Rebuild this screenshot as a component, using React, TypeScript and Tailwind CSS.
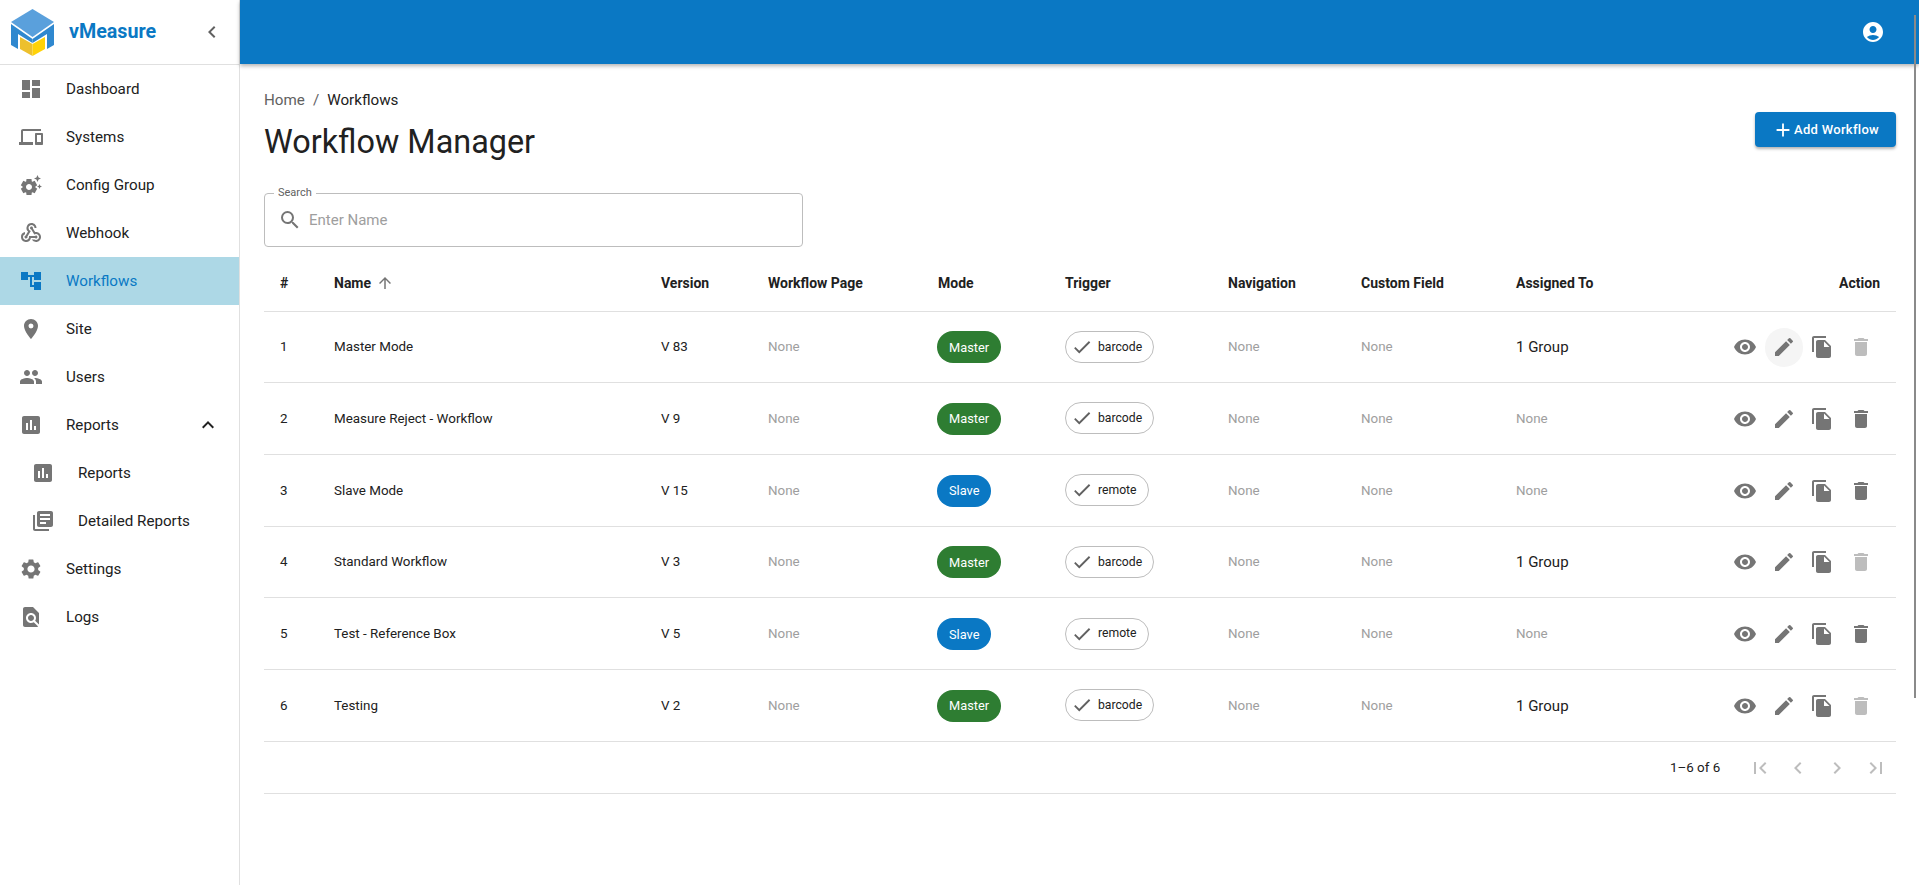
import {
  MdDashboard,
  MdOutlineDevices,
  MdSettingsSuggest,
  MdWebhook,
  MdAccountTree,
  MdPlace,
  MdPeople,
  MdAssessment,
  MdLibraryBooks,
  MdSettings,
  MdFindInPage,
  MdChevronLeft,
  MdExpandLess,
  MdAccountCircle,
  MdAdd,
  MdSearch,
  MdArrowUpward,
  MdVisibility,
  MdEdit,
  MdFileCopy,
  MdDelete,
  MdCheck,
  MdFirstPage,
  MdLastPage,
  MdKeyboardArrowLeft,
  MdKeyboardArrowRight,
} from 'react-icons/md';

const navItems = [
  { label: 'Dashboard', icon: MdDashboard },
  { label: 'Systems', icon: MdOutlineDevices },
  { label: 'Config Group', icon: MdSettingsSuggest },
  { label: 'Webhook', icon: MdWebhook },
  { label: 'Workflows', icon: MdAccountTree, active: true },
  { label: 'Site', icon: MdPlace },
  { label: 'Users', icon: MdPeople },
  { label: 'Reports', icon: MdAssessment, open: true },
  { label: 'Reports', icon: MdAssessment, sub: true },
  { label: 'Detailed Reports', icon: MdLibraryBooks, sub: true },
  { label: 'Settings', icon: MdSettings },
  { label: 'Logs', icon: MdFindInPage },
];

const columns = ['#', 'Name', 'Version', 'Workflow Page', 'Mode', 'Trigger', 'Navigation', 'Custom Field', 'Assigned To'];

const rows = [
  { name: 'Master Mode', version: 'V 83', mode: 'Master', trigger: 'barcode', assigned: '1 Group' },
  { name: 'Measure Reject - Workflow', version: 'V 9', mode: 'Master', trigger: 'barcode', assigned: 'None' },
  { name: 'Slave Mode', version: 'V 15', mode: 'Slave', trigger: 'remote', assigned: 'None' },
  { name: 'Standard Workflow', version: 'V 3', mode: 'Master', trigger: 'barcode', assigned: '1 Group' },
  { name: 'Test - Reference Box', version: 'V 5', mode: 'Slave', trigger: 'remote', assigned: 'None' },
  { name: 'Testing', version: 'V 2', mode: 'Master', trigger: 'barcode', assigned: '1 Group' },
];

function Logo() {
  return (
    <svg width="43" height="47" viewBox="0 0 43 47" className="shrink-0">
      <path d="M21.5 0 43 13 21.5 28 0 13Z" fill="#5aa0dc" />
      <path d="M0 15 21.5 30V34L7 25V40L0 36Z" fill="#2f88cf" />
      <path d="M43 15 21.5 30V34L36 25V40L43 36Z" fill="#2f88cf" />
      <path d="M9 28 21.5 35V47L9 40Z" fill="#edc02e" />
      <path d="M34 28 21.5 35V47L34 40Z" fill="#ffd208" />
    </svg>
  );
}

function Sidebar() {
  return (
    <aside className="w-[240px] shrink-0 min-h-[885px] bg-white border-r border-[#e0e0e0]">
      <div className="h-[65px] flex items-center pl-[11px] pr-[15px] border-b border-[#e0e0e0]">
        <Logo />
        <span className="ml-[15px] text-[19.7px] font-bold text-[#0a78c4] flex-1">vMeasure</span>
        <MdChevronLeft className="text-[24px] text-[#616161]" />
      </div>
      <nav>
        {navItems.map((item) => {
          const Icon = item.icon;
          return (
            <div
              key={item.label + (item.sub ? '-sub' : '')}
              className={`h-12 flex items-center ${item.sub ? 'pl-[31px]' : 'pl-[19px]'} pr-[16px] ${item.active ? 'bg-[#add8e6]' : ''}`}
            >
              <Icon className={`text-[24px] shrink-0 ${item.active ? 'text-[#0a78c4]' : 'text-[#757575]'}`} />
              <span className={`ml-[23px] flex-1 text-[15.2px] ${item.active ? 'text-[#0a78c4]' : 'text-[#212121]'}`}>
                {item.label}
              </span>
              {item.open && <MdExpandLess className="text-[24px] text-[#212121] mr-[3px]" />}
            </div>
          );
        })}
      </nav>
    </aside>
  );
}

function ModeChip({ mode }: { mode: string }) {
  return (
    <span
      className={`inline-flex items-center h-8 px-3 ml-[-1px] rounded-full text-[12.8px] text-white ${mode === 'Master' ? 'bg-[#2e7d32]' : 'bg-[#0a78c4]'}`}
    >
      {mode}
    </span>
  );
}

function TriggerChip({ label }: { label: string }) {
  return (
    <span className="inline-flex items-center h-8 pl-[5px] pr-[11px] rounded-full border border-[#bdbdbd] text-[12.2px] text-[#212121]">
      <MdCheck className="text-[22px] text-[#616161] mr-[5px]" />
      {label}
    </span>
  );
}

function Actions({ assigned, index }: { assigned: boolean; index: number }) {
  const icons = [MdVisibility, MdEdit, MdFileCopy];
  return (
    <div className="flex justify-end items-center">
      {icons.map((Icon, i) => (
        <span
          key={i}
          className={`w-[38.5px] h-[38.5px] flex items-center justify-center rounded-full ${index === 0 && i === 1 ? 'bg-[#f5f5f5]' : ''}`}
        >
          <Icon className="text-[24px] text-[#757575]" />
        </span>
      ))}
      <span className="w-[38.5px] h-10 flex items-center justify-center">
        <MdDelete className={`text-[24px] ${assigned ? 'text-[#bdbdbd]' : 'text-[#757575]'}`} />
      </span>
    </div>
  );
}

export default function App() {
  return (
    <div className="relative h-[885px] overflow-hidden flex bg-white font-['Roboto',sans-serif] text-[#212121]">
      <Sidebar />

      <div className="flex-1 min-w-0">
        <header className="h-16 bg-[#0a78c4] flex items-center justify-end pr-[34px] shadow-[0_2px_4px_rgba(0,0,0,0.3)]">
          <MdAccountCircle className="text-[24px] text-white" />
        </header>

        <main className="pl-6 pr-[23px]">
          <div className="flex justify-between">
            <div>
              <div className="mt-[26px] flex items-center text-[15.2px] leading-[20px]">
                <span className="text-[#616161]">Home</span>
                <span className="mx-2 text-[#616161]">/</span>
                <span>Workflows</span>
              </div>
              <h1 className="mt-[10px] text-[32.4px] leading-[44px] font-normal">Workflow Manager</h1>
            </div>
            <button className="mt-[48px] h-[35px] w-[141px] flex items-center justify-center rounded bg-[#0a78c4] text-white text-[13px] font-medium tracking-[0.3px] shadow-[0_2px_3px_rgba(0,0,0,0.3)]">
              <MdAdd className="text-[22px]" />
              Add Workflow
            </button>
          </div>

          <div className="relative mt-[29px] w-[539px] h-[54px] flex items-center rounded border border-[#bdbdbd] pl-[13px]">
            <span className="absolute -top-[8px] left-[9px] bg-white px-[4px] text-[11px] leading-[14px] text-[#616161]">Search</span>
            <MdSearch className="text-[24px] text-[#757575]" />
            <span className="ml-[7px] text-[15px] text-[#9e9e9e]">Enter Name</span>
          </div>

          <table className="mt-[9px] w-[1632px] table-fixed border-collapse text-[13.4px]">
            <colgroup>
              <col className="w-[54px]" />
              <col className="w-[327px]" />
              <col className="w-[107px]" />
              <col className="w-[170px]" />
              <col className="w-[127px]" />
              <col className="w-[163px]" />
              <col className="w-[133px]" />
              <col className="w-[155px]" />
              <col className="w-[120px]" />
              <col className="w-[276px]" />
            </colgroup>
            <thead>
              <tr className="h-[55px] border-b border-[#e0e0e0]">
                {columns.map((c) => (
                  <th key={c} className="text-left font-bold pl-4 pr-0 text-[14px]">
                    {c === 'Name' ? (
                      <span className="inline-flex items-center">
                        Name
                        <MdArrowUpward className="ml-[5px] text-[18px] text-[#757575]" />
                      </span>
                    ) : (
                      c
                    )}
                  </th>
                ))}
                <th className="text-right font-bold pr-4 text-[14px]">Action</th>
              </tr>
            </thead>
            <tbody>
              {rows.map((r, i) => {
                const assigned = r.assigned !== 'None';
                return (
                  <tr key={r.name} className="h-[71.7px] border-b border-[#e0e0e0] [&>td]:pt-[1px]">
                    <td className="pl-4">{i + 1}</td>
                    <td className="pl-4">{r.name}</td>
                    <td className="pl-4">{r.version}</td>
                    <td className="pl-4 text-[#9e9e9e]">None</td>
                    <td className="pl-4"><ModeChip mode={r.mode} /></td>
                    <td className="pl-4"><TriggerChip label={r.trigger} /></td>
                    <td className="pl-4 text-[#9e9e9e]">None</td>
                    <td className="pl-4 text-[#9e9e9e]">None</td>
                    <td className={`pl-4 ${assigned ? 'text-[15px] text-[#212121]' : 'text-[#9e9e9e]'}`}>{r.assigned}</td>
                    <td className="pr-[16px]"><Actions assigned={assigned} index={i} /></td>
                  </tr>
                );
              })}
            </tbody>
          </table>

          <div className="w-[1632px] h-[52.4px] pt-[1px] flex items-center justify-end border-b border-[#e0e0e0] text-[13.4px] text-[#212121]">
            <span className="mr-[20px]">1–6 of 6</span>
            <div className="flex items-center pr-[1px]">
              {[MdFirstPage, MdKeyboardArrowLeft, MdKeyboardArrowRight, MdLastPage].map((Icon, i) => (
                <span key={i} className="w-[38.7px] flex justify-center">
                  <Icon className="text-[24px] text-[#bdbdbd]" />
                </span>
              ))}
            </div>
          </div>
        </main>
      </div>

      {/* page scrollbar thumb */}
      <div className="absolute right-[3px] top-[15px] w-[2px] h-[683px] bg-[#8a8a8a]" />
    </div>
  );
}
